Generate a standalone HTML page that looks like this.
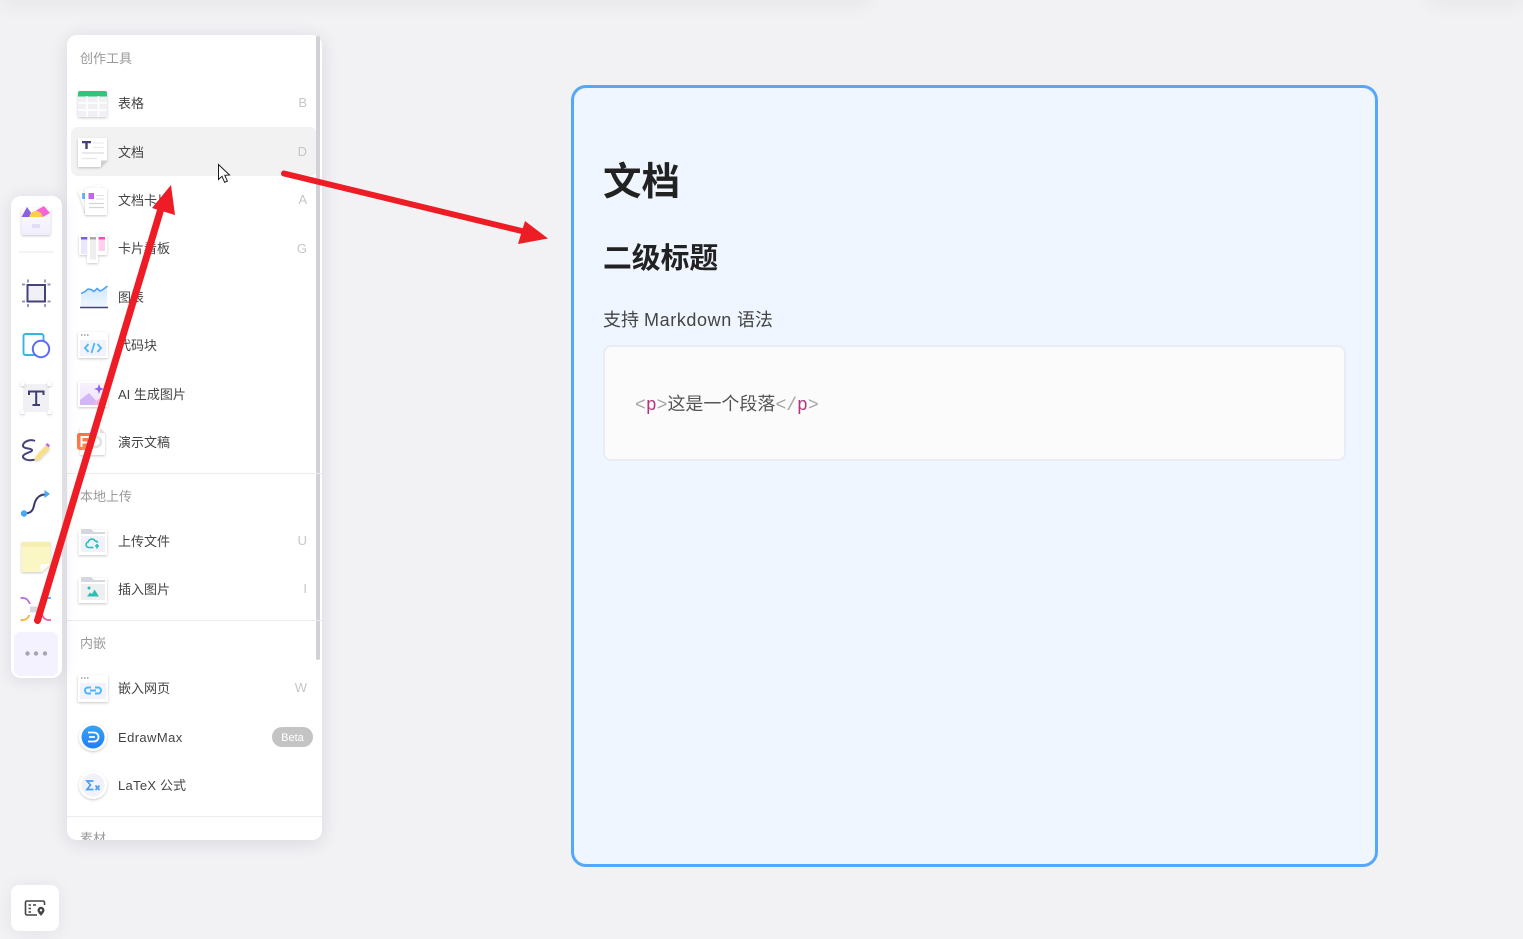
<!DOCTYPE html>
<html lang="zh"><head><meta charset="utf-8"><title>文档</title>
<style>
html,body{margin:0;padding:0;width:1523px;height:939px;overflow:hidden;background:#f2f2f5}
body{position:relative;font-family:"Liberation Sans","Noto Sans CJK SC",sans-serif;color:#333}
.a{position:absolute}
.top1{left:0;top:-20px;width:870px;height:20px;box-shadow:0 4px 22px rgba(0,0,0,.06)}
.top2{left:1430px;top:-20px;width:93px;height:20px;box-shadow:0 4px 22px rgba(0,0,0,.06)}
.panel{left:67px;top:35px;width:255px;height:805px;background:#fff;border-radius:10px;box-shadow:0 3px 18px rgba(30,30,60,.12);overflow:hidden}
.bar{left:11px;top:196px;width:51px;height:482px;background:#fff;border-radius:10px;box-shadow:0 2px 16px rgba(30,30,60,.11)}
.btm{left:11px;top:885px;width:48px;height:46px;background:#fff;border-radius:8px;box-shadow:0 2px 18px rgba(30,30,60,.07)}
.more{left:14px;top:632px;width:44px;height:44px;background:#f4f2ff;border-radius:6px}
.hov{left:71px;top:127px;width:246px;height:49px;background:#f2f2f2;border-radius:7px}
.sb{left:316px;top:36px;width:4px;height:624px;background:#d2d2d6;border-radius:2px}
.dv{left:67px;width:255px;height:1px;background:#ececee}
.l{left:118px;font-size:13px;line-height:18px;color:#444;white-space:nowrap}
.g{left:80px;font-size:13px;line-height:18px;color:#999;white-space:nowrap}
.k{right:1216px;font-size:13px;line-height:18px;color:#c6c6c8}
.beta{left:272px;top:727px;width:41px;height:20px;border-radius:10px;background:#c4c4c4;color:#fff;font-size:11px;line-height:22px;text-align:center}
.doc{left:571px;top:85px;width:807px;height:782px;box-sizing:border-box;border:3px solid #55a8f9;border-radius:15px;background:#f0f6ff}
.h1{left:603px;top:155px;font-size:38.5px;line-height:56px;font-weight:700;color:#222;white-space:nowrap}
.h2{left:603px;top:238px;font-size:28.8px;line-height:42px;font-weight:700;color:#222;white-space:nowrap}
.p{left:603px;top:306px;font-size:18px;line-height:28px;color:#444;white-space:nowrap}
.p span{letter-spacing:.6px}
.code{left:603px;top:345px;width:739px;height:112px;background:#fbfbfb;border:2px solid #e8edf3;border-radius:8px}
.ct{left:635px;top:390px;font-size:18px;line-height:28px;color:#555;white-space:nowrap}
.ct i{font-style:normal;font-family:"Liberation Mono",monospace;color:#a5a5a5}
.ct b{font-weight:400;font-family:"Liberation Mono",monospace;color:#b3337f}
svg{position:absolute;left:0;top:0}
</style></head><body>
<div class="a top1"></div><div class="a top2"></div>
<div class="a panel"></div>
<div class="a hov"></div>
<div class="a sb"></div>
<div class="a dv" style="top:473px"></div>
<div class="a dv" style="top:620px"></div>
<div class="a dv" style="top:816px"></div>
<div class="a bar"></div>
<div class="a more"></div>
<div class="a btm"></div>

<div class="a g" style="top:50px">创作工具</div>
<div class="a l" style="top:95px">表格</div><div class="a k" style="top:94px">B</div>
<div class="a l" style="top:144px">文档</div><div class="a k" style="top:143px">D</div>
<div class="a l" style="top:192px">文档卡片</div><div class="a k" style="top:191px">A</div>
<div class="a l" style="top:240px">卡片看板</div><div class="a k" style="top:240px">G</div>
<div class="a l" style="top:289px">图表</div>
<div class="a l" style="top:337px">代码块</div>
<div class="a l" style="top:386px">AI 生成图片</div>
<div class="a l" style="top:434px">演示文稿</div>
<div class="a g" style="top:488px">本地上传</div>
<div class="a l" style="top:533px">上传文件</div><div class="a k" style="top:532px">U</div>
<div class="a l" style="top:581px">插入图片</div><div class="a k" style="top:580px">I</div>
<div class="a g" style="top:635px">内嵌</div>
<div class="a l" style="top:680px">嵌入网页</div><div class="a k" style="top:679px">W</div>
<div class="a l" style="top:729px;letter-spacing:.4px">EdrawMax</div><div class="a beta">Beta</div>
<div class="a l" style="top:777px"><span style="letter-spacing:.3px">LaTeX</span> 公式</div>
<div class="a" style="left:67px;top:825px;width:255px;height:15px;overflow:hidden"><div class="a g" style="left:13px;top:5px">素材</div></div>

<div class="a doc"></div>
<div class="a h1">文档</div>
<div class="a h2">二级标题</div>
<div class="a p">支持 <span>Markdown</span> 语法</div>
<div class="a code"></div>
<div class="a ct"><i>&lt;</i><b>p</b><i>&gt;</i>这是一个段落<i>&lt;/</i><b>p</b><i>&gt;</i></div>

<svg width="1523" height="939" viewBox="0 0 1523 939" fill="none">
<defs>
<filter id="s" x="-30%" y="-30%" width="160%" height="160%"><feDropShadow dx="0" dy="1" stdDeviation="1.300" flood-color="#000" flood-opacity=".22"/></filter>
<linearGradient id="ch" x1="0" y1="0" x2="0" y2="1"><stop offset="0" stop-color="#cde5ff"/><stop offset="1" stop-color="#f1f8ff"/></linearGradient>
<linearGradient id="ai" x1="0" y1="0" x2="0" y2="1"><stop offset="0" stop-color="#f8f1ff"/><stop offset="1" stop-color="#efe4fb"/></linearGradient>
<linearGradient id="ed" x1="0" y1="0" x2="0" y2="1"><stop offset="0" stop-color="#39a2f3"/><stop offset="1" stop-color="#1f7ffb"/></linearGradient>
<linearGradient id="or" x1="0" y1="0" x2="1" y2="1"><stop offset="0" stop-color="#fb6a3d"/><stop offset="1" stop-color="#ff9263"/></linearGradient>
<linearGradient id="box" x1="0" y1="0" x2="0" y2="1"><stop offset="0" stop-color="#fdfcff"/><stop offset="1" stop-color="#f1edfd"/></linearGradient>
</defs>

<!-- table -->
<g filter="url(#s)"><rect x="78" y="91" width="29" height="26" rx="1" fill="#f1f1f5"/></g>
<path d="M78 93a2 2 0 0 1 2-2h25a2 2 0 0 1 2 2v3.500H78z" fill="#2fc67c"/>
<path d="M78 103h29M78 110h29M87 96v21M98.500 96v21" stroke="#fff" stroke-width="1.500"/>

<!-- doc -->
<g filter="url(#s)"><path d="M78 138h29v22l-7 7H78z" fill="#fff"/></g>
<path d="M101 167v-6.500h6z" fill="#cfcfd3"/>
<path d="M82 141h9v2.200h-3.300v5.800h-2.400v-5.800H82z" fill="#453f7c"/>
<path d="M93 143h11M93 147.500h11" stroke="#ececf0" stroke-width="1.300"/>
<path d="M82 153h22" stroke="#e6e6ea" stroke-width="1.800"/><path d="M82 158.500h15" stroke="#e6e6ea" stroke-width="1.300"/>

<!-- doc cards -->
<g filter="url(#s)"><path d="M78 191L100 184.500L106 200L86 214z" fill="#fff"/></g>
<rect x="82" y="193" width="3.500" height="6" fill="#66bdf5"/>
<g filter="url(#s)"><rect x="85" y="188" width="22" height="27" rx="1" fill="#fff"/></g>
<rect x="88.500" y="193" width="5.500" height="6" fill="#c266ea"/>
<path d="M96 195.500h8M96 199h8" stroke="#e0e0e4" stroke-width="1.100"/>
<path d="M89 203.500h15M89 207.500h15" stroke="#d4d4d8" stroke-width="1.300"/>

<!-- kanban -->
<g filter="url(#s)"><path d="M79 235h28v20h-9v8h-11v-8h-8z" fill="#fff"/></g>
<rect x="81" y="237" width="6.300" height="17" fill="#ebe6fb"/><rect x="81" y="237" width="6.300" height="2.500" fill="#7360ee"/>
<rect x="90" y="237" width="6" height="22.500" fill="#eee"/><rect x="90" y="237" width="6" height="2.500" fill="#a8a8ac"/>
<rect x="98.500" y="237" width="6.500" height="14" fill="#fdd0ee"/><rect x="98.500" y="237" width="6.500" height="2.500" fill="#f44fb8"/>

<!-- chart -->
<path d="M81 293l4-1 3-3 3 1 3 1 3-2 3 2 3-2 4-3v21H81z" fill="url(#ch)"/>
<path d="M81 293.500l4-2 3-2.500 3 .5 3 2 3-3 3 2.500 3-1.500 4.500-3.500" stroke="#4a9ef5" stroke-width="1.500"/>
<path d="M80 307.500h28" stroke="#45447a" stroke-width="1.500"/>

<!-- code -->
<g filter="url(#s)"><rect x="78" y="332" width="30" height="26" fill="#fff"/></g>
<rect x="80" y="340" width="26" height="16" fill="#f1f2fb"/>
<path d="M81 335h1.500M84 335h1.500M87 335h1.500" stroke="#999" stroke-width="1.500"/>
<path d="M88.500 344l-3.500 4 3.500 4M97.500 344l3.500 4-3.500 4M94.500 343l-3 10" stroke="#4cb8f8" stroke-width="1.800"/>

<!-- ai -->
<g filter="url(#s)"><rect x="78" y="381" width="30" height="26" fill="#fff"/></g>
<rect x="80" y="383" width="26" height="22" fill="url(#ai)"/>
<path d="M80 405v-5l9-7 11 12z" fill="#d2b6f7"/>
<path d="M91 405l9-7 6 4.500v2.500z" fill="#f8b0df"/>
<path d="M99 384l1.300 3.700 3.700 1.300-3.700 1.300-1.300 3.700-1.300-3.700-3.700-1.300 3.700-1.300z" fill="#8a62f0"/>

<!-- ppt -->
<g filter="url(#s)"><path d="M80 428h20l5 5v22H80z" fill="#fff"/></g>
<path d="M100 428v5h5z" fill="#ddd"/>
<circle cx="96" cy="442" r="5" fill="none" stroke="#e2e2e2" stroke-width="2.500"/>
<rect x="77" y="433" width="16" height="17" rx="2.500" fill="url(#or)"/>
<path d="M81.500 447v-10h7.500v5.500h-7.500" stroke="#fff" stroke-width="2"/>

<!-- upload folder -->
<g filter="url(#s)"><rect x="78.500" y="530" width="28.500" height="25" fill="#fff"/></g>
<path d="M81 529h10l3 3h11v2H81z" fill="#d6d6e1"/>
<rect x="81" y="536" width="24" height="16" fill="#f1f1f9"/>
<path d="M91 547.500h-2.500a2.800 2.800 0 0 1 -.3-5.500 3.800 3.800 0 0 1 7-1 2.600 2.600 0 0 1 2.500 1.700M89 547.500h4.500M97 544v4.500M95 546h4" stroke="#25bdbd" stroke-width="1.600"/>

<!-- image folder -->
<g filter="url(#s)"><rect x="78.500" y="578" width="28.500" height="25" fill="#fff"/></g>
<path d="M81 577h10l3 3h11v2H81z" fill="#d6d6e1"/>
<rect x="81" y="584" width="24" height="16" fill="#eeeff1"/>
<path d="M87 596.500l3-4 2 1.500 2.500-4.500 4.500 7z" fill="#2dbfb2"/><circle cx="89" cy="588" r="1.500" fill="#2dbfb2"/>

<!-- embed -->
<g filter="url(#s)"><rect x="78" y="675" width="30" height="27" fill="#fff"/></g>
<rect x="80" y="683" width="26" height="16" fill="#f1f2fb"/>
<path d="M81 678h1.500M84 678h1.500M87 678h1.500" stroke="#999" stroke-width="1.500"/>
<path d="M91 687.500h-3a3 3 0 0 0 0 6h3M95 687.500h3a3 3 0 0 1 0 6h-3M90 690.500h6" stroke="#4cb8f8" stroke-width="2"/>

<!-- edraw -->
<g filter="url(#s)"><circle cx="93" cy="737" r="14" fill="#fff"/></g>
<circle cx="93" cy="737" r="11.500" fill="url(#ed)"/>
<path d="M88 732.500h6a4.500 4.500 0 0 1 0 9h-6M89 737h6" stroke="#fff" stroke-width="1.800"/>

<!-- latex -->
<g filter="url(#s)"><circle cx="93" cy="785" r="14" fill="#fff"/></g>
<circle cx="93" cy="785" r="11.500" fill="#f1f1fa"/>
<path d="M93.500 781h-6.500l3.500 4-3.500 4.500h6.500" stroke="#4a9ef5" stroke-width="1.700"/>
<path d="M95.500 785.500l4 4.500M99.500 785.500l-4 4.500" stroke="#4a9ef5" stroke-width="1.700"/>

<!-- toolbar: box -->
<rect x="21.500" y="208" width="29" height="27" rx="2" fill="url(#box)" filter="url(#s)"/>
<path d="M21.500 217l5.500-10 7 10z" fill="#8a62e0"/>
<path d="M36 210.500l8-4.500 6 7-7 4z" fill="#f764d8"/>
<path d="M29.500 217a6.500 6 0 0 1 13 0z" fill="#fbcf4a"/>
<rect x="32" y="224" width="8" height="4" fill="#e3dcf7"/>
<rect x="19" y="251.500" width="35" height="1.200" fill="#ececee"/>

<!-- frame -->
<rect x="27.500" y="285" width="17.500" height="16.500" fill="#f0f0f5" stroke="#45447a" stroke-width="2"/>
<path d="M28 279.500v3M45 279.500v3M28 304v3M45 304v3M22 284.500h3M47.500 284.500h3M22 301.500h3M47.500 301.500h3" stroke="#8b8aac" stroke-width="1.700"/>

<!-- shapes -->
<rect x="23.500" y="334" width="20" height="21" rx="2" fill="#fff" stroke="#36b6df" stroke-width="1.900"/>
<circle cx="41" cy="349" r="8.200" fill="#fff" stroke="#5f6cf2" stroke-width="2"/>

<!-- text -->
<rect x="23" y="384" width="26" height="28" fill="#f0f0f5"/>
<g fill="#fff" filter="url(#s)"><rect x="20.500" y="382" width="4" height="4"/><rect x="47.500" y="382" width="4" height="4"/><rect x="20.500" y="410" width="4" height="4"/><rect x="47.500" y="410" width="4" height="4"/></g>
<path d="M29 395v-3.500h14.500v3.500M36.200 391.500v13.500M32.500 405h7.500" stroke="#3f3e72" stroke-width="2"/>

<!-- pen -->
<path d="M35 441c-4-2-11 0-12 4-1 4 8 3 9 5 1 2-8 3-9 6-.5 3 5 5 9 4 2 0 3 0 3-1" stroke="#45447a" stroke-width="2"/>
<path d="M34 461l2-5 10-11 4 3.500-10.500 11z" fill="#f7e08a" filter="url(#s)"/>
<path d="M45.500 444.500l2-1.500 2.500 2.500-1.500 2z" fill="#c266ea"/>

<!-- connector -->
<path d="M24 513.500c7 0 9-3 10-8s4-11 11-11" stroke="#39386e" stroke-width="2"/>
<circle cx="24" cy="513.500" r="3.200" fill="#45a8f2"/>
<path d="M44.500 490l5.500 4-5.500 4z" fill="#45a8f2"/>

<!-- sticky -->
<path d="M21.500 542h29v22l-8 8h-21z" fill="#fbf7c5" filter="url(#s)"/>
<rect x="21.500" y="542" width="29" height="4.500" fill="#f6eeb0"/>
<path d="M40.500 572v-7.500q0-.5 .5-.5h9.500z" fill="#fff"/>

<!-- mind map -->
<path d="M20.500 598c5-.5 8 1 10 8" stroke="#c16de0" stroke-width="1.800"/>
<path d="M51 598c-5-.5-8 1-10 8" stroke="#4aa8f2" stroke-width="1.800"/>
<path d="M20.500 620c5 .5 8-1 10-8" stroke="#f5b23f" stroke-width="1.800"/>
<path d="M51 620c-5 .5-8-1-10-8" stroke="#ee5fa8" stroke-width="1.800"/>
<rect x="27" y="604" width="18" height="11" rx="1" fill="#fff"/>
<rect x="30" y="606.500" width="11" height="6" fill="#d8d8dc"/>

<!-- more dots -->
<circle cx="27.500" cy="653.500" r="2.200" fill="#a6a6ae"/><circle cx="36" cy="653.500" r="2.200" fill="#a6a6ae"/><circle cx="45" cy="653.500" r="2.200" fill="#a6a6ae"/>

<!-- bottom -->
<path d="M44.500 905v-2.500a1.500 1.500 0 0 0-1.500-1.500H27a1.500 1.500 0 0 0-1.500 1.500v11a1.500 1.500 0 0 0 1.500 1.500h10" stroke="#444" stroke-width="1.600"/>
<path d="M28.500 905h2.500M28.500 908.500h2.500M28.500 912h2.500M33 905h3" stroke="#444" stroke-width="1.500"/>
<path d="M41 916c-2-2.500-3.500-4-3.500-5.700a3.500 3.500 0 0 1 7 0c0 1.700-1.500 3.200-3.500 5.700z" fill="#444"/><circle cx="41" cy="910.300" r="1.200" fill="#fff"/>

<!-- cursor -->
<path d="M218.500 164.500v15l3.500-3.200 2.600 6 2.800-1.200-2.600-5.800 4.700-.3z" fill="#fff" stroke="#1b1b24" stroke-width="1"/>

<!-- arrows -->
<path d="M37.500 620.500L163 202" stroke="#ee1c25" stroke-width="7" stroke-linecap="round"/>
<path d="M171 185l4 30-23-7z" fill="#ee1c25"/>
<path d="M284 173.500L528 232.500" stroke="#ee1c25" stroke-width="6" stroke-linecap="round"/>
<path d="M548 238.500l-30 5.500 7-23z" fill="#ee1c25"/>
</svg>
</body></html>
